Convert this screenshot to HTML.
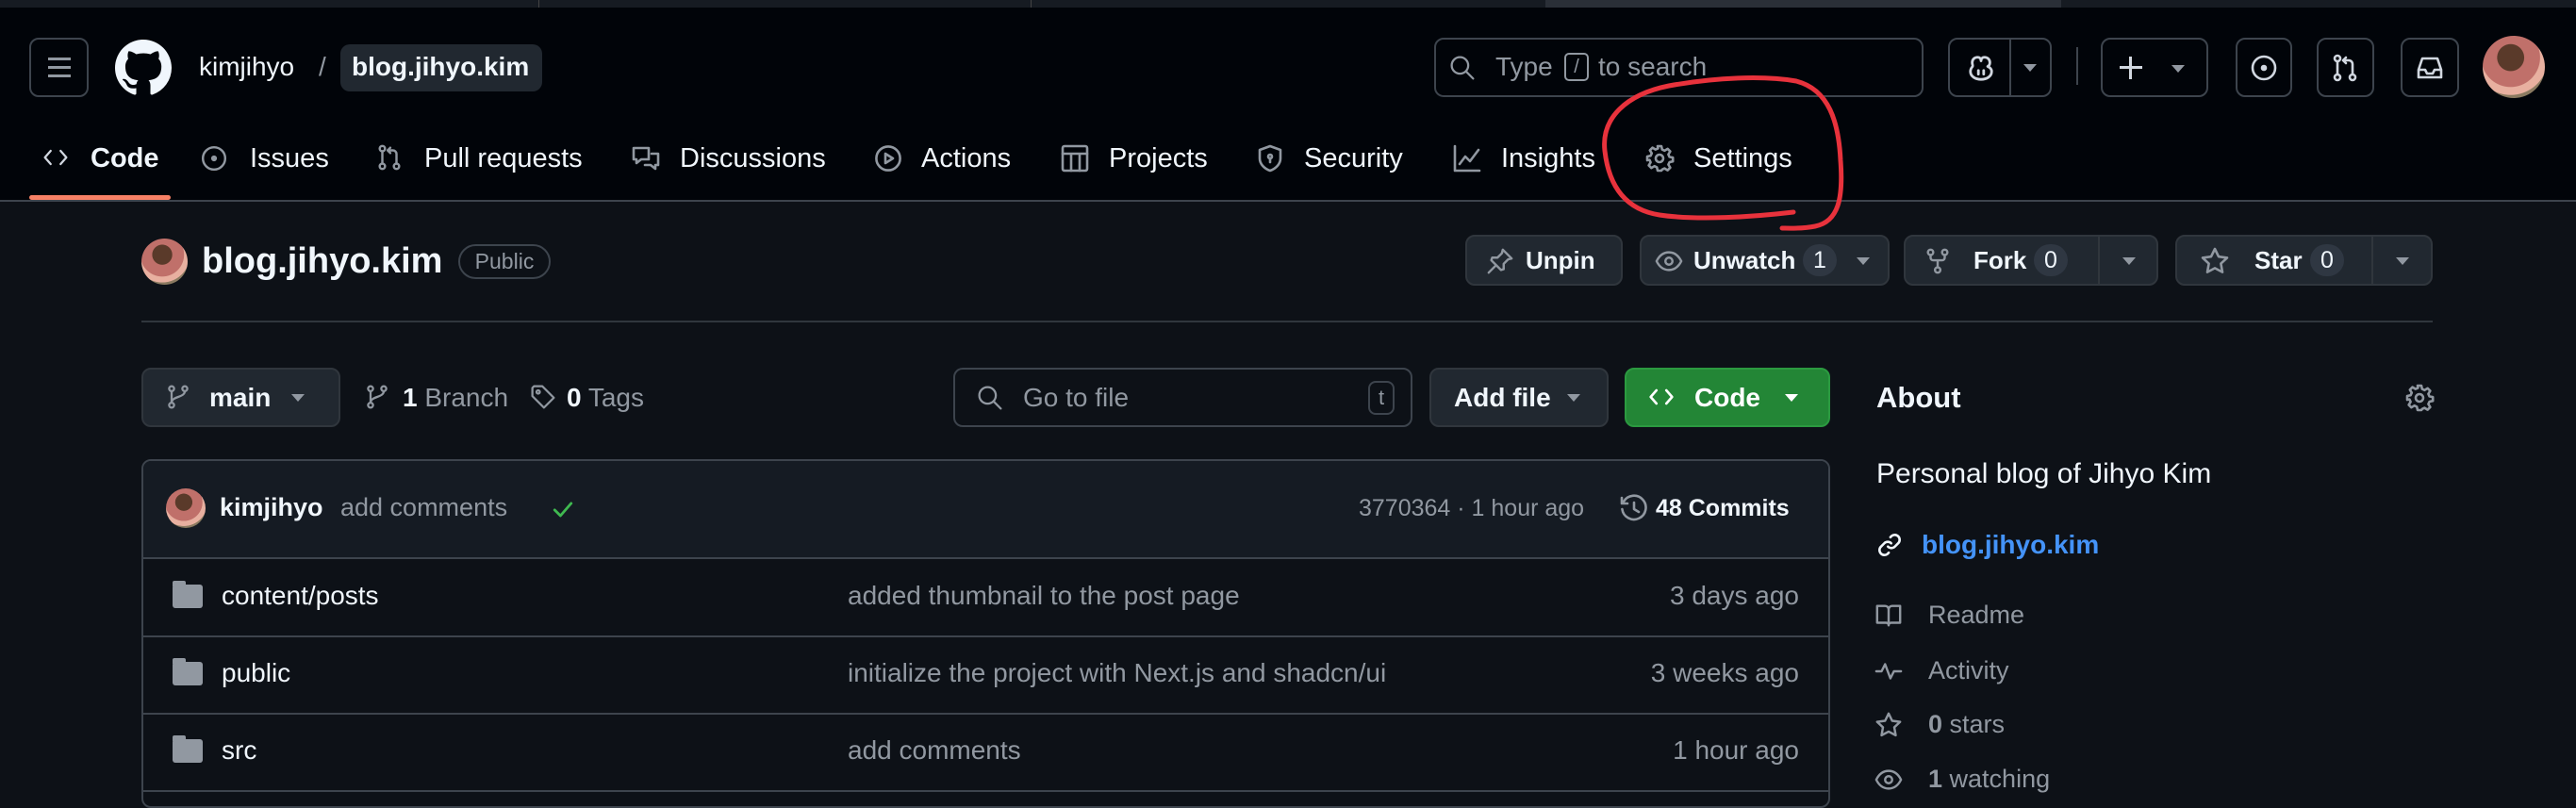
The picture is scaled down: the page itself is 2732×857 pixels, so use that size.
<!DOCTYPE html>
<html><head><meta charset="utf-8"><style>
*{margin:0;padding:0;box-sizing:border-box}
body{width:2732px;height:846px;overflow:hidden;background:#0d1117;font-family:"Liberation Sans",sans-serif;color:#f0f6fc;position:relative}
.a{position:absolute}
.t{position:absolute;white-space:nowrap;line-height:40px;height:40px}
.btn{position:absolute;border:2px solid #30363d;border-radius:10px;background:#212830}
.hb{position:absolute;border:2px solid #3d444d;border-radius:10px;background:#010409}
svg.i{position:absolute;fill:none;stroke:#9198a1;stroke-width:1.3;stroke-linecap:round;stroke-linejoin:round}
.g{color:#9198a1}
.cnt{position:absolute;background:#2f3742;border-radius:20px;height:34px;line-height:34px;text-align:center;font-size:25px}
.car{position:absolute;width:0;height:0;border-left:7px solid transparent;border-right:7px solid transparent;border-top:8px solid #9198a1}
</style></head><body>
<!-- top strip -->
<div class="a" style="left:0;top:0;width:2732px;height:8px;background:#161b22"></div>
<div class="a" style="left:1639px;top:0;width:547px;height:8px;background:#2a2f37"></div>
<div class="a" style="left:571px;top:0;width:1px;height:8px;background:#444"></div>
<div class="a" style="left:1093px;top:0;width:1px;height:8px;background:#444"></div>
<!-- header -->
<div class="a" style="left:0;top:8px;width:2732px;height:206px;background:#010409;border-bottom:2px solid #3d444d"></div>
<div class="hb" style="left:31px;top:40px;width:63px;height:63px"></div>
<div class="a" style="left:51px;top:61px;width:24px;height:3px;background:#9198a1;box-shadow:0 9px 0 #9198a1,0 18px 0 #9198a1"></div>
<svg class="a" style="left:122px;top:42px" width="60" height="60" viewBox="0 0 16 16"><path fill="#f0f6fc" d="M8 0C3.58 0 0 3.58 0 8c0 3.54 2.29 6.53 5.47 7.59.4.07.55-.17.55-.38 0-.19-.01-.82-.01-1.49-2.01.37-2.53-.49-2.69-.94-.09-.23-.48-.94-.82-1.13-.28-.15-.68-.52-.01-.53.63-.01 1.08.58 1.23.82.72 1.21 1.87.87 2.33.66.07-.52.28-.87.51-1.07-1.78-.2-3.64-.89-3.64-3.95 0-.87.31-1.59.82-2.15-.08-.2-.36-1.02.08-2.12 0 0 .67-.21 2.2.82.64-.18 1.32-.27 2-.27.68 0 1.36.09 2 .27 1.53-1.04 2.2-.82 2.2-.82.44 1.1.16 1.92.08 2.12.51.56.82 1.27.82 2.15 0 3.07-1.87 3.75-3.65 3.95.29.25.54.73.54 1.48 0 1.07-.01 1.93-.01 2.2 0 .21.15.46.55.38A8.013 8.013 0 0016 8c0-4.42-3.58-8-8-8z"/></svg>
<div class="t" style="left:211px;top:51px;font-size:28px">kimjihyo</div>
<div class="t g" style="left:338px;top:51px;font-size:28px">/</div>
<div class="a" style="left:361px;top:47px;width:214px;height:50px;background:#212830;border-radius:10px"></div>
<div class="t" style="left:373px;top:51px;font-size:28px;font-weight:bold">blog.jihyo.kim</div>
<!-- search -->
<div class="hb" style="left:1521px;top:40px;width:519px;height:63px"></div>
<svg class="i" style="left:1537px;top:58px" width="28" height="28" viewBox="0 0 16 16"><circle cx="6.5" cy="6.5" r="5"/><path d="M10.2 10.2 14.5 14.5"/></svg>
<div class="t g" style="left:1586px;top:51px;font-size:28px">Type</div>
<div class="a" style="left:1659px;top:56px;width:26px;height:30px;border:2px solid #9198a1;border-radius:5px;color:#9198a1;font-size:20px;text-align:center;line-height:26px">/</div>
<div class="t g" style="left:1695px;top:51px;font-size:28px">to search</div>
<!-- right buttons -->
<div class="hb" style="left:2066px;top:40px;width:110px;height:63px"></div>
<div class="a" style="left:2131px;top:40px;width:2px;height:63px;background:#3d444d"></div>
<svg class="i" style="left:2086px;top:57px;stroke:#d1d7e0;stroke-width:1.5" width="30" height="30" viewBox="0 0 16 16"><path d="M3 5c0-2 1.5-3 3-3s2 1 2 2c0-1 .5-2 2-2s3 1 3 3c0 1-.5 1.8-1.2 2.2C13.5 8 14 9 14 10c0 3-3 4.5-6 4.5S2 13 2 10c0-1 .5-2 1.2-2.8C3.5 6.8 3 6 3 5z"/><path d="M6.5 9.5v2M9.5 9.5v2"/></svg>
<div class="car" style="left:2146px;top:68px"></div>
<div class="a" style="left:2202px;top:50px;width:2px;height:40px;background:#3d444d"></div>
<div class="hb" style="left:2228px;top:40px;width:114px;height:63px"></div>
<div class="a" style="left:2248px;top:70px;width:24px;height:3px;background:#d1d7e0"></div>
<div class="a" style="left:2258px;top:60px;width:3px;height:24px;background:#d1d7e0"></div>
<div class="car" style="left:2303px;top:69px"></div>
<div class="hb" style="left:2371px;top:40px;width:60px;height:63px"></div>
<svg class="i" style="left:2385px;top:56px;stroke:#d1d7e0" width="32" height="32" viewBox="0 0 16 16"><circle cx="8" cy="8" r="6"/><circle cx="8" cy="8" r="1" fill="#d1d7e0"/></svg>
<div class="hb" style="left:2457px;top:40px;width:61px;height:63px"></div>
<svg class="i" style="left:2471px;top:56px;stroke:#d1d7e0" width="32" height="32" viewBox="0 0 16 16"><circle cx="4" cy="3" r="1.5"/><circle cx="4" cy="13" r="1.5"/><circle cx="12" cy="13" r="1.5"/><path d="M4 4.5v7M12 11.5V6a2 2 0 0 0-2-2H7M8.5 2.5 7 4l1.5 1.5"/></svg>
<div class="hb" style="left:2546px;top:40px;width:62px;height:63px"></div>
<svg class="i" style="left:2561px;top:56px;stroke:#d1d7e0" width="32" height="32" viewBox="0 0 16 16"><path d="M2 9 4 3h8l2 6v4H2zM2 9h3.5l1 2h3l1-2H14"/></svg>
<div class="a" style="left:2633px;top:38px;width:66px;height:66px;border-radius:50%;background:radial-gradient(circle at 45% 35%,#5a3a2a 0 25%,#c0706a 26% 55%,#e8b0a0 56% 70%,#8a7a60 71%)"></div>
<!-- nav -->
<svg class="i" style="left:45px;top:153px;stroke:#d1d7e0" width="28" height="28" viewBox="0 0 16 16"><path d="M5 4 1.5 8 5 12M11 4l3.5 4-3.5 4"/></svg>
<div class="t" style="left:96px;top:148px;font-size:29px;font-weight:bold">Code</div>
<div class="a" style="left:31px;top:207px;width:150px;height:5px;background:#f78166;border-radius:3px"></div>
<svg class="i" style="left:212px;top:153px;stroke:#9198a1" width="30" height="30" viewBox="0 0 16 16"><circle cx="8" cy="8" r="6.3"/><circle cx="8" cy="8" r="1" fill="#9198a1"/></svg>
<div class="t" style="left:265px;top:148px;font-size:29px">Issues</div>
<svg class="i" style="left:398px;top:152px" width="30" height="30" viewBox="0 0 16 16"><circle cx="4" cy="3" r="1.5"/><circle cx="4" cy="13" r="1.5"/><circle cx="12" cy="13" r="1.5"/><path d="M4 4.5v7M12 11.5V6a2 2 0 0 0-2-2H7M8.5 2.5 7 4l1.5 1.5"/></svg>
<div class="t" style="left:450px;top:148px;font-size:29px">Pull requests</div>
<svg class="i" style="left:669px;top:152px" width="32" height="32" viewBox="0 0 16 16"><path d="M1.5 2.5h8v6h-4l-2.5 2v-2H1.5zM11 5.5h3.5v6H13v2l-2.5-2H7.5"/></svg>
<div class="t" style="left:721px;top:148px;font-size:29px">Discussions</div>
<svg class="i" style="left:926px;top:152px" width="32" height="32" viewBox="0 0 16 16"><circle cx="8" cy="8" r="6.3"/><path d="M6.5 5.5v5l4-2.5z"/></svg>
<div class="t" style="left:977px;top:148px;font-size:29px">Actions</div>
<svg class="i" style="left:1124px;top:152px" width="32" height="32" viewBox="0 0 16 16"><rect x="1.5" y="1.5" width="13" height="13" rx="1"/><path d="M1.5 5.5h13M6 5.5v9M10.5 5.5v9"/></svg>
<div class="t" style="left:1176px;top:148px;font-size:29px">Projects</div>
<svg class="i" style="left:1331px;top:152px" width="32" height="32" viewBox="0 0 16 16"><path d="M8 1.5 2.5 3.5V8c0 3 2.5 5.5 5.5 6.5 3-1 5.5-3.5 5.5-6.5V3.5z"/><circle cx="8" cy="7" r="1"/><path d="M8 8v2"/></svg>
<div class="t" style="left:1383px;top:148px;font-size:29px">Security</div>
<svg class="i" style="left:1540px;top:152px" width="32" height="32" viewBox="0 0 16 16"><path d="M1.5 1.5v13h13M4 11l3-4 2.5 2.5 4.5-6"/></svg>
<div class="t" style="left:1592px;top:148px;font-size:29px">Insights</div>
<svg class="i" style="left:1744px;top:152px" width="32" height="32" viewBox="0 0 16 16"><path d="M7 1.5h2l.4 1.8 1.3.6 1.6-1 1.4 1.4-1 1.6.6 1.3 1.8.4v2l-1.8.4-.6 1.3 1 1.6-1.4 1.4-1.6-1-1.3.6L9 14.5H7l-.4-1.8-1.3-.6-1.6 1-1.4-1.4 1-1.6-.6-1.3L1.5 9V7l1.8-.4.6-1.3-1-1.6 1.4-1.4 1.6 1 1.3-.6z"/><circle cx="8" cy="8" r="2"/></svg>
<div class="t" style="left:1796px;top:148px;font-size:29px">Settings</div>
<svg class="a" style="left:0;top:0" width="2732" height="846"><path d="M1902 225 C1860 230 1800 234 1760 228 C1722 222 1706 195 1702 160 C1698 125 1725 100 1770 91 C1820 82 1870 80 1905 86 C1940 95 1950 130 1952 170 C1955 210 1950 235 1925 240 C1910 243 1895 242 1890 242" fill="none" stroke="#e8323c" stroke-width="5" stroke-linecap="round"/></svg>
<!-- repo header -->
<div class="a" style="left:150px;top:253px;width:49px;height:49px;border-radius:50%;background:radial-gradient(circle at 45% 35%,#5a3a2a 0 25%,#c0706a 26% 55%,#e8b0a0 56% 70%,#8a7a60 71%)"></div>
<div class="t" style="left:214px;top:257px;font-size:38px;font-weight:bold">blog.jihyo.kim</div>
<div class="a g" style="left:486px;top:259px;width:98px;height:37px;border:2px solid #3d444d;border-radius:20px;font-size:23px;text-align:center;line-height:33px">Public</div>
<div class="btn" style="left:1554px;top:249px;width:167px;height:54px"></div>
<svg class="i" style="left:1576px;top:262px" width="30" height="30" viewBox="0 0 16 16"><path d="M9.5 1.5 14.5 6.5 12.5 7 10 9.5 10 12.5 8.5 13 3 7.5 3.5 6 6.5 6 9 3.5zM5.5 10.5 1.5 14.5"/></svg>
<div class="t" style="left:1618px;top:256px;font-size:26px;font-weight:bold">Unpin</div>
<div class="btn" style="left:1739px;top:249px;width:265px;height:54px"></div>
<svg class="i" style="left:1755px;top:262px" width="30" height="30" viewBox="0 0 16 16"><path d="M1 8c2-4 4.5-5 7-5s5 1 7 5c-2 4-4.5 5-7 5s-5-1-7-5z"/><circle cx="8" cy="8" r="2"/></svg>
<div class="t" style="left:1796px;top:256px;font-size:26px;font-weight:bold">Unwatch</div>
<div class="cnt" style="left:1912px;top:259px;width:36px">1</div>
<div class="car" style="left:1969px;top:273px"></div>
<div class="btn" style="left:2019px;top:249px;width:270px;height:54px"></div>
<div class="a" style="left:2225px;top:251px;width:2px;height:50px;background:#30363d"></div>
<svg class="i" style="left:2040px;top:262px" width="30" height="30" viewBox="0 0 16 16"><circle cx="4" cy="3" r="1.5"/><circle cx="12" cy="3" r="1.5"/><circle cx="8" cy="13" r="1.5"/><path d="M4 4.5V6a1.5 1.5 0 0 0 1.5 1.5h5A1.5 1.5 0 0 0 12 6V4.5M8 7.5v4"/></svg>
<div class="t" style="left:2093px;top:256px;font-size:26px;font-weight:bold">Fork</div>
<div class="cnt" style="left:2157px;top:259px;width:36px">0</div>
<div class="car" style="left:2251px;top:273px"></div>
<div class="btn" style="left:2307px;top:249px;width:273px;height:54px"></div>
<div class="a" style="left:2515px;top:251px;width:2px;height:50px;background:#30363d"></div>
<svg class="i" style="left:2333px;top:261px" width="32" height="32" viewBox="0 0 16 16"><path d="M8 1.5 10 5.6l4.5.6-3.3 3.1.8 4.5L8 11.7l-4 2.1.8-4.5L1.5 6.2 6 5.6z"/></svg>
<div class="t" style="left:2391px;top:256px;font-size:26px;font-weight:bold">Star</div>
<div class="cnt" style="left:2450px;top:259px;width:36px">0</div>
<div class="car" style="left:2541px;top:273px"></div>
<div class="a" style="left:150px;top:340px;width:2430px;height:2px;background:#30363d"></div>
<!-- toolbar -->
<div class="btn" style="left:150px;top:390px;width:211px;height:63px"></div>
<svg class="i" style="left:175px;top:407px" width="28" height="28" viewBox="0 0 16 16"><circle cx="4" cy="3" r="1.5"/><circle cx="4" cy="13" r="1.5"/><circle cx="12" cy="3" r="1.5"/><path d="M4 4.5v7M12 4.5c0 4-8 3-8 7"/></svg>
<div class="t" style="left:222px;top:402px;font-size:28px;font-weight:bold">main</div>
<div class="car" style="left:309px;top:418px"></div>
<svg class="i" style="left:386px;top:407px" width="28" height="28" viewBox="0 0 16 16"><circle cx="4" cy="3" r="1.5"/><circle cx="4" cy="13" r="1.5"/><circle cx="12" cy="3" r="1.5"/><path d="M4 4.5v7M12 4.5c0 4-8 3-8 7"/></svg>
<div class="t" style="left:427px;top:402px;font-size:28px"><b>1</b> <span class="g">Branch</span></div>
<svg class="i" style="left:562px;top:407px" width="28" height="28" viewBox="0 0 16 16"><path d="M1.5 2.5v5l7 7 6-6-7-7h-5z"/><circle cx="5" cy="5" r="1"/></svg>
<div class="t" style="left:601px;top:402px;font-size:28px"><b>0</b> <span class="g">Tags</span></div>
<div class="a" style="left:1011px;top:390px;width:487px;height:63px;border:2px solid #3d444d;border-radius:10px;background:#0d1117"></div>
<svg class="i" style="left:1036px;top:408px" width="28" height="28" viewBox="0 0 16 16"><circle cx="6.5" cy="6.5" r="5"/><path d="M10.2 10.2 14.5 14.5"/></svg>
<div class="t g" style="left:1085px;top:402px;font-size:28px">Go to file</div>
<div class="a g" style="left:1451px;top:404px;width:28px;height:36px;border:2px solid #3d444d;border-radius:8px;font-size:22px;text-align:center;line-height:32px">t</div>
<div class="btn" style="left:1516px;top:390px;width:190px;height:63px"></div>
<div class="t" style="left:1542px;top:402px;font-size:28px;font-weight:bold">Add file</div>
<div class="car" style="left:1662px;top:418px"></div>
<div class="a" style="left:1723px;top:390px;width:218px;height:63px;background:#238636;border-radius:10px;border:2px solid #2b9a40"></div>
<svg class="i" style="left:1748px;top:407px;stroke:#fff;stroke-width:1.5" width="28" height="28" viewBox="0 0 16 16"><path d="M5 4 1.5 8 5 12M11 4l3.5 4-3.5 4"/></svg>
<div class="t" style="left:1797px;top:402px;font-size:28px;font-weight:bold;color:#fff">Code</div>
<div class="car" style="left:1893px;top:418px;border-top-color:#fff"></div>
<!-- table -->
<div class="a" style="left:150px;top:487px;width:1791px;height:370px;border:2px solid #3d444d;border-radius:10px;overflow:hidden">
 <div class="a" style="left:0;top:0;width:100%;height:104px;background:#151b23;border-bottom:2px solid #3d444d"></div>
 <div class="a" style="left:0;top:185px;width:100%;height:2px;background:#3d444d"></div>
 <div class="a" style="left:0;top:267px;width:100%;height:2px;background:#3d444d"></div>
 <div class="a" style="left:0;top:349px;width:100%;height:2px;background:#3d444d"></div>
</div>
<div class="a" style="left:176px;top:518px;width:42px;height:42px;border-radius:50%;background:radial-gradient(circle at 45% 35%,#5a3a2a 0 25%,#c0706a 26% 55%,#e8b0a0 56% 70%,#8a7a60 71%)"></div>
<div class="t" style="left:233px;top:518px;font-size:27px;font-weight:bold">kimjihyo</div>
<div class="t g" style="left:361px;top:518px;font-size:27px">add comments</div>
<svg class="i" style="left:583px;top:526px;stroke:#3fb950;stroke-width:1.6" width="28" height="28" viewBox="0 0 16 16"><path d="M3 8.5 6.5 12 13 4.5"/></svg>
<div class="t g" style="left:1441px;top:519px;font-size:25px">3770364 · 1 hour ago</div>
<svg class="i" style="left:1717px;top:524px" width="32" height="32" viewBox="0 0 16 16"><path d="M2.5 4A6.3 6.3 0 1 1 1.7 8M1.5 2v3h3M8 4.5V8l2.5 1.5"/></svg>
<div class="t" style="left:1756px;top:519px;font-size:25px;font-weight:bold">48 Commits</div>
<!-- rows -->
<div class="a" style="left:183px;top:620px;width:32px;height:25px;background:#9198a1;border-radius:3px"></div>
<div class="a" style="left:183px;top:616px;width:14px;height:6px;background:#9198a1;border-radius:2px 2px 0 0"></div>
<div class="t" style="left:235px;top:612px;font-size:28px">content/posts</div>
<div class="t g" style="left:899px;top:612px;font-size:28px">added thumbnail to the post page</div>
<div class="t g" style="right:824px;top:612px;font-size:28px">3 days ago</div>
<div class="a" style="left:183px;top:702px;width:32px;height:25px;background:#9198a1;border-radius:3px"></div>
<div class="a" style="left:183px;top:698px;width:14px;height:6px;background:#9198a1;border-radius:2px 2px 0 0"></div>
<div class="t" style="left:235px;top:694px;font-size:28px">public</div>
<div class="t g" style="left:899px;top:694px;font-size:28px">initialize the project with Next.js and shadcn/ui</div>
<div class="t g" style="right:824px;top:694px;font-size:28px">3 weeks ago</div>
<div class="a" style="left:183px;top:784px;width:32px;height:25px;background:#9198a1;border-radius:3px"></div>
<div class="a" style="left:183px;top:780px;width:14px;height:6px;background:#9198a1;border-radius:2px 2px 0 0"></div>
<div class="t" style="left:235px;top:776px;font-size:28px">src</div>
<div class="t g" style="left:899px;top:776px;font-size:28px">add comments</div>
<div class="t g" style="right:824px;top:776px;font-size:28px">1 hour ago</div>
<!-- about -->
<div class="t" style="left:1990px;top:402px;font-size:31px;font-weight:bold">About</div>
<svg class="i" style="left:2550px;top:406px" width="32" height="32" viewBox="0 0 16 16"><path d="M7 1.5h2l.4 1.8 1.3.6 1.6-1 1.4 1.4-1 1.6.6 1.3 1.8.4v2l-1.8.4-.6 1.3 1 1.6-1.4 1.4-1.6-1-1.3.6L9 14.5H7l-.4-1.8-1.3-.6-1.6 1-1.4-1.4 1-1.6-.6-1.3L1.5 9V7l1.8-.4.6-1.3-1-1.6 1.4-1.4 1.6 1 1.3-.6z"/><circle cx="8" cy="8" r="2"/></svg>
<div class="t" style="left:1990px;top:483px;font-size:30px">Personal blog of Jihyo Kim</div>
<svg class="i" style="left:1990px;top:564px;stroke:#f0f6fc;stroke-width:1.5" width="28" height="28" viewBox="0 0 16 16"><path d="M7 9a3 3 0 0 0 4.2 0l2.3-2.3a3 3 0 0 0-4.2-4.2L8.5 3.3M9 7a3 3 0 0 0-4.2 0L2.5 9.3a3 3 0 0 0 4.2 4.2l.8-.8"/></svg>
<div class="t" style="left:2038px;top:558px;font-size:28px;font-weight:bold;color:#4493f8">blog.jihyo.kim</div>
<svg class="i" style="left:1988px;top:638px" width="30" height="30" viewBox="0 0 16 16"><path d="M1.5 2.5h4.5A2 2 0 0 1 8 4.5v9a1.5 1.5 0 0 0-1.5-1.5h-5zM14.5 2.5H10A2 2 0 0 0 8 4.5v9A1.5 1.5 0 0 1 9.5 12h5z"/></svg>
<div class="t g" style="left:2045px;top:632px;font-size:27px">Readme</div>
<svg class="i" style="left:1988px;top:697px" width="30" height="30" viewBox="0 0 16 16"><path d="M1 8h3l2-4 3 8 2-4h4"/></svg>
<div class="t g" style="left:2045px;top:691px;font-size:27px">Activity</div>
<svg class="i" style="left:1988px;top:754px" width="30" height="30" viewBox="0 0 16 16"><path d="M8 1.5 10 5.6l4.5.6-3.3 3.1.8 4.5L8 11.7l-4 2.1.8-4.5L1.5 6.2 6 5.6z"/></svg>
<div class="t g" style="left:2045px;top:748px;font-size:27px"><b>0</b> stars</div>
<svg class="i" style="left:1988px;top:812px" width="30" height="30" viewBox="0 0 16 16"><path d="M1 8c2-4 4.5-5 7-5s5 1 7 5c-2 4-4.5 5-7 5s-5-1-7-5z"/><circle cx="8" cy="8" r="2"/></svg>
<div class="t g" style="left:2045px;top:806px;font-size:27px"><b>1</b> watching</div>
</body></html>
